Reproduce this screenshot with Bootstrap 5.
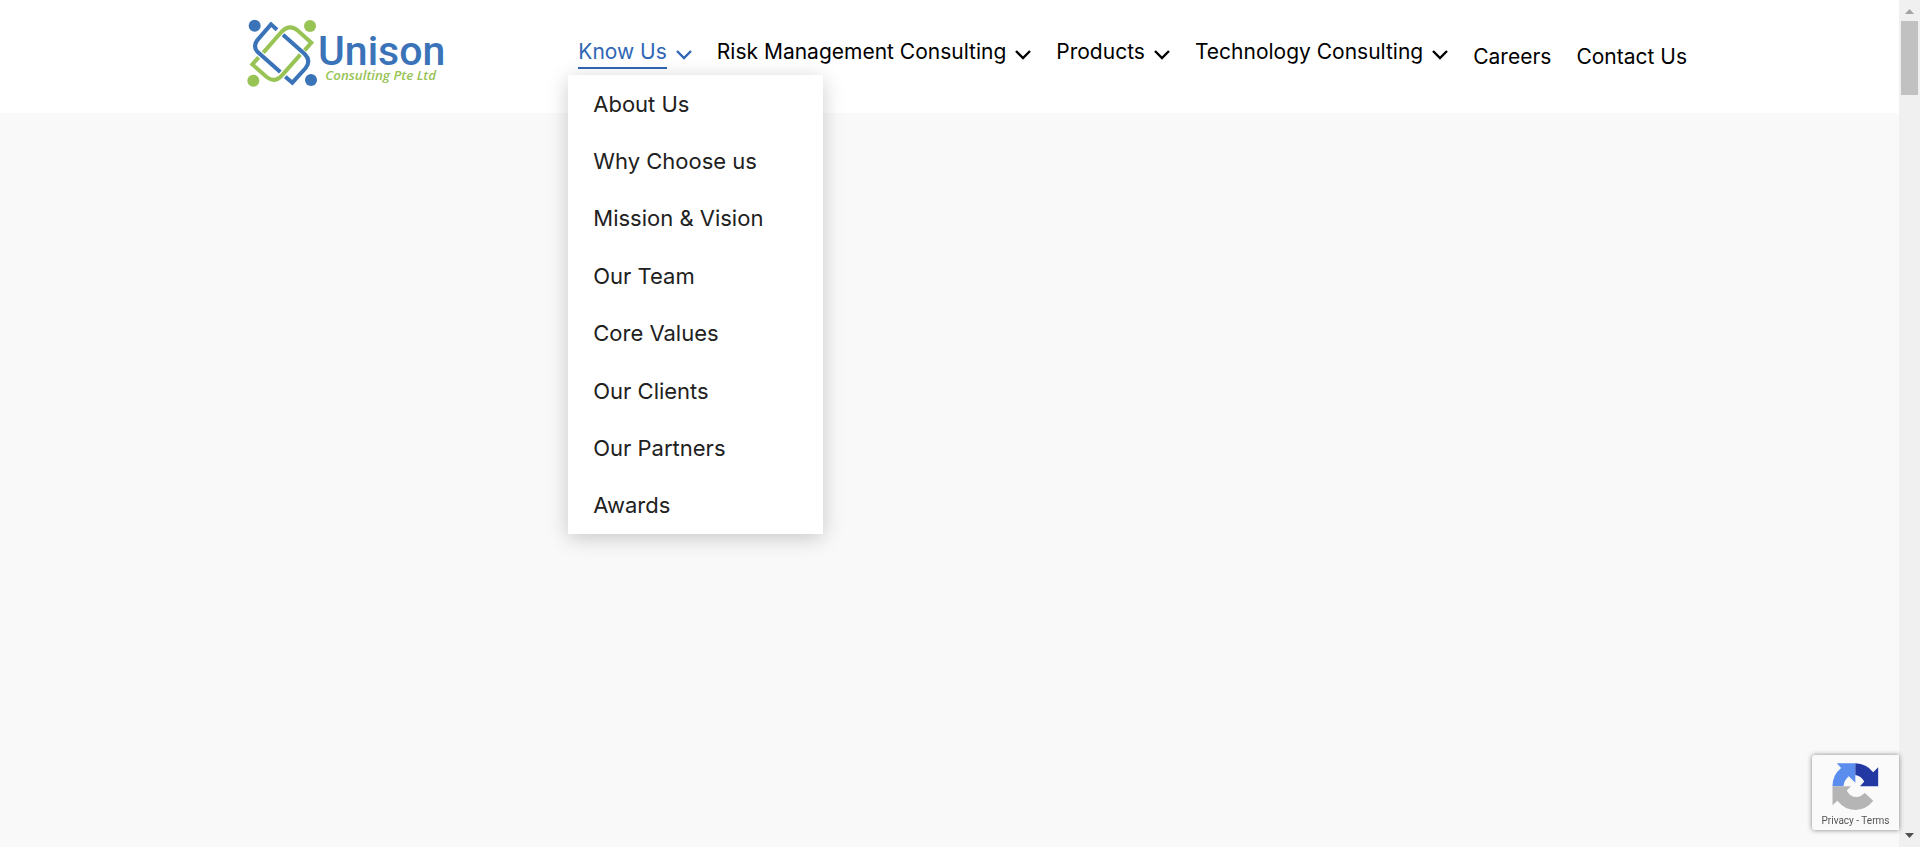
<!DOCTYPE html>
<html lang="en">
<head>
<meta charset="utf-8">
<meta name="viewport" content="width=device-width, initial-scale=1">
<title>Unison Consulting</title>
<link rel="stylesheet" href="https://cdn.jsdelivr.net/npm/bootstrap@5.3.0/dist/css/bootstrap.min.css">
<style>
  :root { --link: #2f66b5; }
  body { background: #f9f9f9; font-family: Inter, "Liberation Sans", sans-serif; font-size: 21px; line-height: 24px; color: #000; }
  .site-bar { height: 113px; }
  .site-bar-inner { max-width: 1475px; padding-left: 28px; }
  .main-menu { gap: 25px; white-space: nowrap; }
  .menu-link { gap: 9px; padding: 0; border: 0; background: none; color: #000; text-decoration: none; }
  .menu-label { margin-bottom: 4px; padding-bottom: 3px; border-bottom: 2px solid transparent; }
  .menu-link.active { color: var(--link); }
  .menu-link.active .menu-label { border-color: var(--link); }
  .sub-menu.dropdown-menu { top: 100%; left: -10px; width: 255px; height: 459px; margin-top: 2px; padding: 0; border: 0; border-radius: 0; box-shadow: 0 4px 20px rgba(0,0,0,.2); font-size: 22px; }
  .sub-menu .dropdown-item { padding: 0 25px; color: #212121; }
  .scroll-rail { width: 21px; background: #f0f0f0; }
  .scroll-thumb { width: 17px; height: 74px; background: #c1c1c1; }
  .captcha { right: 21px; bottom: 17px; width: 87px; height: 75px; padding-top: 8px; border-radius: 3px 0 0 3px; background: #fafafa; box-shadow: 0 0 5px #808080; }
  .captcha-links { font: 10px/12px Roboto, sans-serif; color: #555; margin-top: 5px; }
</style>
</head>
<body class="d-flex vh-100 overflow-hidden">
<svg class="d-none"><symbol id="chevron" viewBox="0 0 16 10"><path d="M1 1l7 7 7-7" fill="none" stroke="currentColor" stroke-width="2.4"/></symbol></svg>
<div class="flex-grow-1">
  <header class="site-bar bg-white">
    <div class="site-bar-inner h-100 mx-auto d-flex align-items-center justify-content-between">
      <a class="mb-2" href="#" aria-label="Unison Consulting">
        <svg class="d-block" width="210" height="85" viewBox="0 0 630 255">
          <g transform="translate(12 12)" fill="none" stroke-width="12">
            <g stroke="#3a73b8">
              <path d="M99 47L81 31L42 76Q24 96 42 115L109 174"/>
              <path d="M117 62L182 120Q202 140 185 162L145 206L124 188"/>
            </g>
            <g stroke="#98c355">
              <path d="M58 116L112 54Q137 28 162 50L202 86L182 109"/>
              <path d="M44 130L25 151L68 189Q92 208 114 184L169 122"/>
            </g>
          </g>
          <g fill="#3a73b8"><circle cx="44" cy="47" r="18"/><circle cx="213" cy="210" r="18"/></g>
          <g fill="#98c355"><circle cx="210" cy="48" r="18"/><circle cx="40" cy="212" r="18"/></g>
          <text x="234" y="166" font-family="Roboto, sans-serif" font-weight="500" font-size="123" fill="#3a73b8">Unison</text>
          <text x="256" y="209" font-family="Open Sans, sans-serif" font-style="italic" font-weight="600" font-size="40" fill="#98c355">Consulting Pte Ltd</text>
        </svg>
      </a>
      <nav aria-label="Main">
        <ul class="main-menu list-unstyled d-flex align-items-center mb-0">
          <li class="position-relative">
            <button class="menu-link active d-flex align-items-center" type="button" aria-expanded="true"><span class="menu-label">Know Us</span><svg class="mb-1" width="16" height="10"><use href="#chevron"/></svg></button>
            <ul class="sub-menu dropdown-menu show d-flex flex-column justify-content-around">
              <li><a class="dropdown-item" href="#">About Us</a></li>
              <li><a class="dropdown-item" href="#">Why Choose us</a></li>
              <li><a class="dropdown-item" href="#">Mission &amp; Vision</a></li>
              <li><a class="dropdown-item" href="#">Our Team</a></li>
              <li><a class="dropdown-item" href="#">Core Values</a></li>
              <li><a class="dropdown-item" href="#">Our Clients</a></li>
              <li><a class="dropdown-item" href="#">Our Partners</a></li>
              <li><a class="dropdown-item" href="#">Awards</a></li>
            </ul>
          </li>
          <li><button class="menu-link d-flex align-items-center" type="button"><span class="menu-label">Risk Management Consulting</span><svg class="mb-1" width="16" height="10"><use href="#chevron"/></svg></button></li>
          <li><button class="menu-link d-flex align-items-center" type="button"><span class="menu-label">Products</span><svg class="mb-1" width="16" height="10"><use href="#chevron"/></svg></button></li>
          <li><button class="menu-link d-flex align-items-center" type="button"><span class="menu-label">Technology Consulting</span><svg class="mb-1" width="16" height="10"><use href="#chevron"/></svg></button></li>
          <li><a class="menu-link" href="#">Careers</a></li>
          <li><a class="menu-link" href="#">Contact Us</a></li>
        </ul>
      </nav>
    </div>
  </header>
</div>
<aside class="captcha position-fixed d-flex flex-column align-items-center">
  <svg width="47" height="47" viewBox="74 44 141 142">
    <path fill="#5b8def" d="M144 45H88L101 59A70 70 0 0 0 75 114H108Q110 96 124 84L144 104Z"/>
    <path fill="#2338a3" d="M144 45Q178 46 198 72L213 57V114H158L171 100Q161 82 144 80Z"/>
    <path fill="#b5b5b5" d="M75 114H131L118 127Q127 147 148 147Q162 146 172 134L198 158Q177 185 144 186Q111 185 90 158L75 172Z"/>
  </svg>
  <div class="captcha-links"><a class="text-reset text-decoration-none" href="#">Privacy</a> - <a class="text-reset text-decoration-none" href="#">Terms</a></div>
</aside>
<div class="scroll-rail d-flex flex-column align-items-center justify-content-between" aria-hidden="true">
  <div class="d-flex flex-column align-items-center">
    <svg width="21" height="21"><path d="M6 14L10.500 9L15 14Z" fill="#a3a3a3"/></svg>
    <div class="scroll-thumb"></div>
  </div>
  <svg width="21" height="21"><path d="M6 7L10.500 12L15 7Z" fill="#505050"/></svg>
</div>
<script src="https://cdn.jsdelivr.net/npm/bootstrap@5.3.0/dist/js/bootstrap.bundle.min.js"></script>
</body>
</html>
